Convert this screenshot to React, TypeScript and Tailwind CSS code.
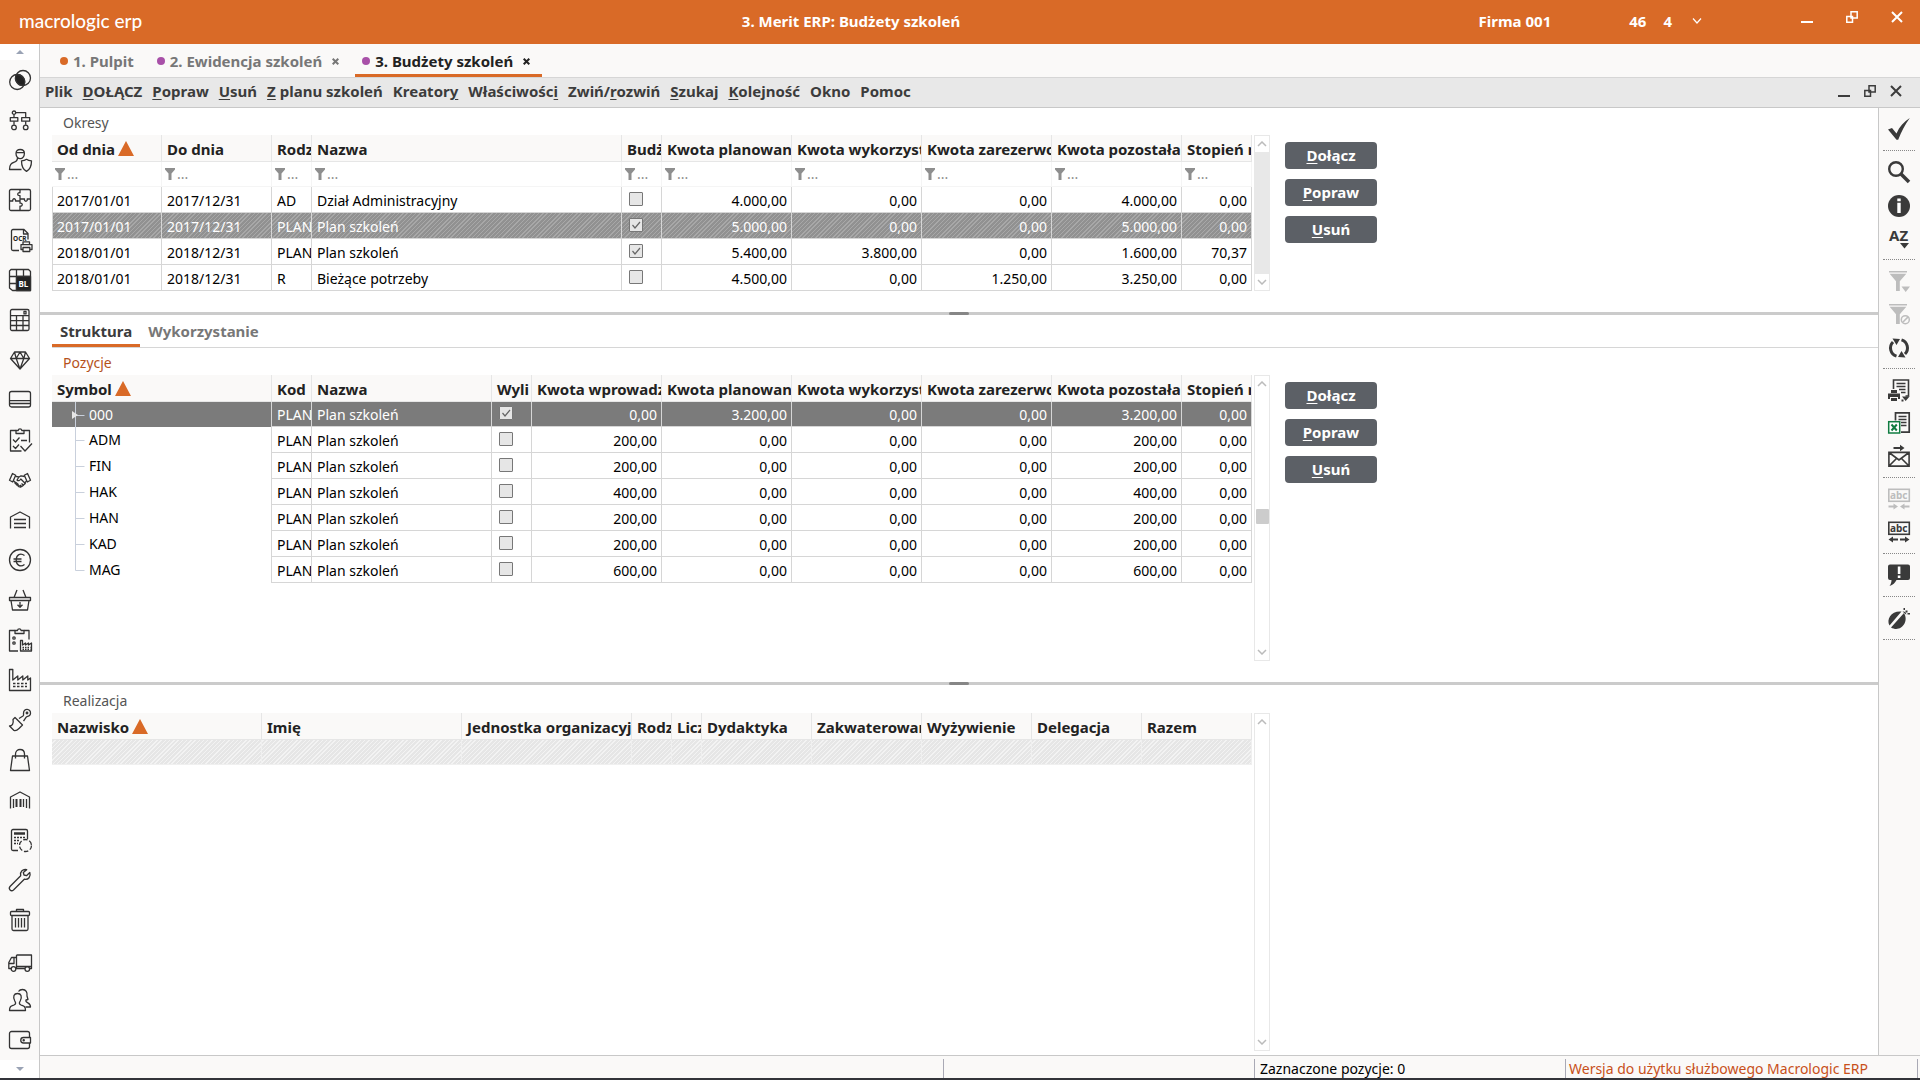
import type { ReactNode } from "react";

type Align = "left" | "right" | "check";

type Column = {
  label: string;
  width: number;
  align?: Align;
  sorted?: boolean;
};

type Row = {
  cells: (string | boolean)[];
  selected?: boolean;
};

const periodColumns: Column[] = [
  { label: "Od dnia", width: 110, sorted: true },
  { label: "Do dnia", width: 110 },
  { label: "Rodz", width: 40 },
  { label: "Nazwa", width: 310 },
  { label: "Budż", width: 40, align: "check" },
  { label: "Kwota planowana", width: 130, align: "right" },
  { label: "Kwota wykorzyst", width: 130, align: "right" },
  { label: "Kwota zarezerwo", width: 130, align: "right" },
  { label: "Kwota pozostała", width: 130, align: "right" },
  { label: "Stopień r", width: 70, align: "right" },
];

const periodRows: Row[] = [
  { cells: ["2017/01/01", "2017/12/31", "AD", "Dział Administracyjny", false, "4.000,00", "0,00", "0,00", "4.000,00", "0,00"] },
  { cells: ["2017/01/01", "2017/12/31", "PLAN", "Plan szkoleń", true, "5.000,00", "0,00", "0,00", "5.000,00", "0,00"], selected: true },
  { cells: ["2018/01/01", "2018/12/31", "PLAN", "Plan szkoleń", true, "5.400,00", "3.800,00", "0,00", "1.600,00", "70,37"] },
  { cells: ["2018/01/01", "2018/12/31", "R", "Bieżące potrzeby", false, "4.500,00", "0,00", "1.250,00", "3.250,00", "0,00"] },
];

const itemColumns: Column[] = [
  { label: "Symbol", width: 220, sorted: true },
  { label: "Kod", width: 40 },
  { label: "Nazwa", width: 180 },
  { label: "Wyli", width: 40, align: "check" },
  { label: "Kwota wprowadz", width: 130, align: "right" },
  { label: "Kwota planowana", width: 130, align: "right" },
  { label: "Kwota wykorzyst", width: 130, align: "right" },
  { label: "Kwota zarezerwo", width: 130, align: "right" },
  { label: "Kwota pozostała", width: 130, align: "right" },
  { label: "Stopień r", width: 70, align: "right" },
];

const itemRows: Row[] = [
  { cells: ["000", "PLAN", "Plan szkoleń", true, "0,00", "3.200,00", "0,00", "0,00", "3.200,00", "0,00"], selected: true },
  { cells: ["ADM", "PLAN", "Plan szkoleń", false, "200,00", "0,00", "0,00", "0,00", "200,00", "0,00"] },
  { cells: ["FIN", "PLAN", "Plan szkoleń", false, "200,00", "0,00", "0,00", "0,00", "200,00", "0,00"] },
  { cells: ["HAK", "PLAN", "Plan szkoleń", false, "400,00", "0,00", "0,00", "0,00", "400,00", "0,00"] },
  { cells: ["HAN", "PLAN", "Plan szkoleń", false, "200,00", "0,00", "0,00", "0,00", "200,00", "0,00"] },
  { cells: ["KAD", "PLAN", "Plan szkoleń", false, "200,00", "0,00", "0,00", "0,00", "200,00", "0,00"] },
  { cells: ["MAG", "PLAN", "Plan szkoleń", false, "600,00", "0,00", "0,00", "0,00", "600,00", "0,00"] },
];

const executionColumns: Column[] = [
  { label: "Nazwisko", width: 210, sorted: true },
  { label: "Imię", width: 200 },
  { label: "Jednostka organizacyj", width: 170 },
  { label: "Rodz", width: 40 },
  { label: "Licz", width: 30 },
  { label: "Dydaktyka", width: 110 },
  { label: "Zakwaterowan", width: 110 },
  { label: "Wyżywienie", width: 110 },
  { label: "Delegacja", width: 110 },
  { label: "Razem", width: 110 },
];

// before, hot key, after
const menuItems: [string, string, string][] = [
  ["Plik", "", ""],
  ["", "D", "OŁĄCZ"],
  ["", "P", "opraw"],
  ["", "U", "suń"],
  ["", "Z", " planu szkoleń"],
  ["Kreator", "y", ""],
  ["Właściwośc", "i", ""],
  ["Zwiń/", "r", "ozwiń"],
  ["", "S", "zukaj"],
  ["", "K", "olejność"],
  ["Okno", "", ""],
  ["Pomoc", "", ""],
];

const sidebarIcons: { name: string; art: ReactNode }[] = [
  {
    name: "Controlling",
    art: (
      <>
        <circle cx="9.2" cy="14" r="7.5" />
        <circle cx="15" cy="10" r="7.5" />
        <path d="M8.34 6.55A7.5 7.5 0 0 1 15.86 17.45A7.5 7.5 0 0 1 8.34 6.55z" fill="#222" />
      </>
    ),
  },
  {
    name: "Struktura",
    art: (
      <>
        <circle cx="6" cy="4.7" r="1.7" />
        <path d="M7.7 4.7h10v5M6 6.4v3.3M6 13.2v3.6M17.7 13.2v3.6" />
        <rect x="2.3" y="9.7" width="7.5" height="3.5" />
        <rect x="13.7" y="9.7" width="8" height="3.5" />
        <circle cx="6" cy="19.4" r="2.3" />
        <circle cx="17.7" cy="19.4" r="2.3" />
      </>
    ),
  },
  {
    name: "Uprawnienia",
    art: (
      <>
        <path d="M8 5.5c0-2.8 1.6-4 4.2-4s4.2 1.2 4.2 4c0 2.600-1.800 5.200-4.200 5.200S8 8.100 8 5.500zM8 4.600h8.400" />
        <path d="M9.500 9.500c0 3-1 4-3.200 4.700C3.300 15.300 1.500 16.500 1.500 21.500h12" />
        <path d="M13.500 12.800c2 0 3.700-.5 5-1.500 1.300 1 3 1.500 5 1.500 0 5-1.300 8.700-5 10.600-3.700-1.900-5-5.600-5-10.600z" />
      </>
    ),
  },
  {
    name: "Moduły",
    art: (
      <>
        <rect x="1.500" y="1.500" width="21" height="21" rx="1.500" />
        <path d="M12 1.500v3.300c-3-.8-3 3.400 0 2.800v3.600M12 12.500v2.700c3-.7 3 3.500 0 2.900v4.400M1.500 13h3.300c-.8-3 3.400-3 2.700 0H12M22.500 11h-3.300c.8 3-3.400 3-2.700 0H12v2" />
      </>
    ),
  },
  {
    name: "OCR",
    art: (
      <>
        <path d="M11 22.500H5a1.500 1.500 0 0 1-1.500-1.500V3A1.500 1.500 0 0 1 5 1.500h11l4 4v6M15.500 1.500V6H20" />
        <text x="5" y="13" fontSize="6.500" fontWeight="700" fill="#222" stroke="none">OCR</text>
        <path d="M15 16.500v-2.700h6.500v2.700M14.500 21.500H13v-4.800h11v4.800h-1.500M15 19.500h6.800v4H15z" />
      </>
    ),
  },
  {
    name: "BL",
    art: (
      <>
        <path d="M3 1.500h17.500l2 2v19H4.500l-3-2.500V3z" />
        <path d="M8.500 1.500v21M15.500 1.500V9M1.500 8.500h21M1.500 15.500h7" />
        <path d="M8.500 8.500h14v14h-14z" fill="#222" />
        <text x="10.500" y="19" fontSize="8" fontWeight="700" fill="#fff" stroke="none">BL</text>
      </>
    ),
  },
  {
    name: "Kalkulator",
    art: (
      <>
        <rect x="2.500" y="1.500" width="18.500" height="21" rx="1.500" />
        <path d="M2.500 7.700H21M2.500 12.700H21M2.500 17.500H21M8.500 7.700v14.800M15 7.700v14.800" />
        <rect x="16" y="3.300" width="2" height="2.600" />
      </>
    ),
  },
  {
    name: "Środki trwałe",
    art: <path d="M6.500 4h11l4 6.500L12 21 2.500 10.500zM2.500 10.500h19M6.500 4l1.700 6.500L12 21l3.800-10.500L17.500 4M8.200 10.500 12 4l3.800 6.500" />,
  },
  {
    name: "Karta",
    art: (
      <>
        <rect x="1.500" y="3.500" width="21" height="15.500" rx="2" />
        <path d="M1.500 12.700h21M1.500 15.500h21" />
      </>
    ),
  },
  {
    name: "Zadania",
    art: (
      <>
        <path d="M8 2.500H2.500v20.500h11M16 2.500h5.500v12" />
        <path d="M8 5.500V2.500h2.200c.3-2.300 3.300-2.300 3.600 0H16v3z" />
        <path d="m5 11.500 2.500 2.500 4-4.500M13 12.500h6M5 18l2.500 2.500 3.500-4M12.500 18l4.500 5 7-7.500" />
      </>
    ),
  },
  {
    name: "Kontrahenci",
    art: (
      <>
        <path d="m4.500 5.500 3.200 1.700L4.700 14l-3.200-1.700zM19.500 5.500l-3.200 1.700L19.300 14l3.200-1.700z" />
        <path d="M7.500 8.300 11 9l2-1.200 3.500.7M5.500 12.800l2 2M18.500 12.800l-1.700 2.200M11 9l-2 3c1.200 1.200 2.700.7 3.800-1l4.500 4.500-1.500 1.300M13.500 15.500l2 1.800-1.700 1.200-1.800-1.500M12 17l1 1.800-1.500.6" />
        <path d="m7 16 1.500-1.800M8.500 17.500l1.700-2M10.200 18.800l1.300-1.500" strokeWidth="2" />
      </>
    ),
  },
  {
    name: "Magazyn",
    art: <path d="M2.500 20.500V9L12 4l9.500 5v11.500M6 11.500h12M6 15.500h12M6 19.500h12" />,
  },
  {
    name: "Finanse",
    art: (
      <>
        <circle cx="12" cy="12" r="10.500" />
        <path d="M16.500 7.500c-4-3-8.300-.8-8.300 4.500s4.300 7.500 8.300 4.500M5.500 11h8M5.500 13.500h8" />
      </>
    ),
  },
  {
    name: "Zakupy",
    art: (
      <>
        <path d="M1.500 9.500h21v3h-21zM3 12.500 4.500 22h15l1.500-9.500M6 9.500l3-7.500M18 9.500 15 2M12 14v5M9.500 16.700 12 19.200l2.500-2.500" />
      </>
    ),
  },
  {
    name: "Zlecenia produkcji",
    art: (
      <>
        <path d="M7 2.500H1.500v20.500H10M16 2.500h5v9" />
        <path d="M7 5.500V2.500h2.500c.3-2.300 3.300-2.300 3.600 0H16v3z" />
        <circle cx="6" cy="10" r="1.200" />
        <circle cx="6" cy="15" r="1.200" />
        <path d="M12.500 23V12.500h2V17l3-2v2l3-2v2l3-2v8z" />
        <path d="M14.500 19.500h8M14.500 21.300h8" strokeDasharray="1.500 1" />
      </>
    ),
  },
  {
    name: "Produkcja",
    art: (
      <>
        <path d="M1.500 22.500v-21h3.300V12l5-4v4l5-4v4l5-4v4l2.700-2v12.500z" />
        <path d="M5 15.500h14M5 18.500h14" strokeDasharray="2.500 1.500" />
      </>
    ),
  },
  {
    name: "Czyszczenie",
    art: (
      <>
        <path d="M7 9.500 14.500 17 11 20.500c-2 2-3.500 2.500-5 2L1.500 18c2.500 0 4.500-2 3.500-6.500zM11 10.500l4-2.500c1-.7.500-1.500.5-2.700 0-5.500 7.500-5 7 .2-.3 3.500-3.500 2.500-4.300 3.700l-2.700 4M9 11.500l3.500 3.500" />
        <circle cx="19" cy="5" r=".8" />
      </>
    ),
  },
  {
    name: "Sprzedaż",
    art: (
      <>
        <path d="M4.500 8h15l2 14.500h-19z" />
        <path d="M7.500 10.500V6c0-6 9-6 9 0v4.500" />
      </>
    ),
  },
  {
    name: "Magazyn kodów",
    art: (
      <>
        <path d="M2.500 20.500V9L12 4l9.500 5v11.500" />
        <path d="M5.500 11v9M15.500 11v8M18.500 11v9" />
        <path d="M8.500 11v8M12.500 11v8" strokeWidth="2" />
      </>
    ),
  },
  {
    name: "Rozliczenia",
    art: (
      <>
        <path d="M10 22.500H5A1.500 1.500 0 0 1 3.500 21V3A1.500 1.500 0 0 1 5 1.500h13A1.500 1.500 0 0 1 19.500 3v8" />
        <path d="M6 5.500h11" strokeWidth="2.500" />
        <path d="M6 9.500h11M6 12.500h6M6 15.500h4" strokeDasharray="2 1" />
        <circle cx="17.500" cy="17.500" r="6" strokeDasharray="4.500 1.800" />
      </>
    ),
  },
  {
    name: "Serwis",
    art: <path d="M21.800 4.500 18.500 7.700 16 7l-.7-2.500L18.700 1.700c-3.700-1-7 2-6 6L2 18.500c-2 2.500 1 5.500 3.500 3.500L16.300 11.200c4 1 6.900-2.700 5.500-6.700z" />,
  },
  {
    name: "Kosz",
    art: (
      <>
        <rect x="2.500" y="3.500" width="19" height="4" rx="1" />
        <path d="M8.500 3.500v-2h7v2M4 7.500v13.500a1.500 1.500 0 0 0 1.500 1.500h13a1.500 1.500 0 0 0 1.500-1.500V7.500M7.500 10v9.500M10.500 10v9.500M13.500 10v9.500M16.500 10v9.500" />
      </>
    ),
  },
  {
    name: "Transport",
    art: (
      <>
        <path d="M8.500 7H23.500v13.500H22M8.500 9.500H3.500L.8 14.500v6H3M8.500 7v13.500M8 20.500h9M.8 15.500H6v-6M8.500 18.500h15" />
        <circle cx="5.500" cy="21" r="2.300" />
        <circle cx="19.300" cy="21" r="2.300" />
      </>
    ),
  },
  {
    name: "Kadry",
    art: (
      <>
        <path d="M1.500 22.500c0-4.500 2-4.500 4.500-5.500 2-.8 2-2 .8-4C4.500 8.500 6 5.500 9.500 5.500s5 3 2.700 7.500c-1.200 2-1.200 3.200.8 4 2.500 1 4.500 1 4.500 5.500z" />
        <path d="M10.500 3.500c1-1.500 2.300-2 4-2 3.500 0 5 3 4.500 6.500l1 3.500-2 .5c-.5 1.500 0 2 1.500 2.700 2 1 3 1.300 3 4.300h-5" />
      </>
    ),
  },
  {
    name: "Kasa",
    art: (
      <>
        <path d="M21.500 9V5.500a2 2 0 0 0-2-2h-16a2 2 0 0 0-2 2v13a2 2 0 0 0 2 2h16a2 2 0 0 0 2-2V15" />
        <path d="M22.500 9.500h-7a2.700 2.700 0 0 0 0 5.500h7z" />
        <circle cx="15.700" cy="12.200" r=".6" />
      </>
    ),
  },
];

function ToolIcon({ children }: { children: ReactNode }) {
  return (
    <svg viewBox="1 1 22 22" className="h-[22px] w-[22px] overflow-visible" fill="#3a3a3a" stroke="none" aria-hidden="true">
      {children}
    </svg>
  );
}

const toolGroups: { name: string; disabled?: boolean; art: ReactNode }[][] = [
  [{ name: "Zatwierdź", art: <path d="M1 12.500 5 11l4.500 5.500C12.500 9.500 17 4.500 22.800 1 18 7.500 14.500 14.500 11.200 22.800H9.500z" /> }],
  [
    {
      name: "Szukaj",
      art: (
        <g fill="none" stroke="#3a3a3a">
          <circle cx="9" cy="9" r="6.800" strokeWidth="2.400" />
          <path d="m14 14 8 8" strokeWidth="3.600" />
        </g>
      ),
    },
    {
      name: "Informacje",
      art: (
        <>
          <circle cx="12" cy="13" r="11" />
          <path d="M10.300 5.500h3.400v2.700h-3.400zM10.300 9.700h3.400V20h-3.400z" fill="#fff" />
        </>
      ),
    },
    {
      name: "Sortuj",
      art: (
        <>
          <text x="2" y="15" fontSize="15" fontWeight="700">AZ</text>
          <path d="M13 17h9L17.500 22.500z" />
        </>
      ),
    },
  ],
  [
    {
      name: "Filtr",
      disabled: true,
      art: (
        <g fill="#bdbdbd">
          <path d="M2 2h18v1.600H2zM2.700 4.700h16.600l-6.500 7.500V22H9v-9.800zM14.500 17.500h8.500L18.700 23z" />
        </g>
      ),
    },
    {
      name: "Usuń filtr",
      disabled: true,
      art: (
        <g fill="#bdbdbd">
          <path d="M2 2h18v1.600H2zM2.700 4.700h16.600l-6.500 7.500V22H9v-9.800z" />
          <circle cx="18.300" cy="17.700" r="5" fill="#faf9f8" />
          <circle cx="18.300" cy="17.700" r="4" fill="none" stroke="#bdbdbd" strokeWidth="1.500" />
          <path d="m15.500 20.500 5.600-5.600" stroke="#bdbdbd" strokeWidth="1.500" />
        </g>
      ),
    },
    {
      name: "Odśwież",
      art: (
        <>
          <g fill="none" stroke="#3a3a3a" strokeWidth="3">
            <path d="M14.500 4.900A8.500 8.500 0 0 1 18 19" />
            <path d="M9.500 21.100A8.500 8.500 0 0 1 6 7" />
          </g>
          <path d="M5.500 3.500 13 4l-3.500 6zM18.500 22.500 11 22l3.500-6z" />
        </>
      ),
    },
  ],
  [
    {
      name: "Drukuj",
      art: (
        <>
          <path d="M6.500 11V2H21.500v16h-3M9.500 5.500h9M9.500 8.500h9M12 11.500h6.500M14 14.500h4.500" fill="none" stroke="#3a3a3a" strokeWidth="1.600" />
          <path d="M4 12h6v3H4zM1 15.500h12V21h-2v-2H3v2H1zM4 20h6v3H4zM14.500 21.500h2v2h-2zM15 18.500h7.500L18.700 23z" />
        </>
      ),
    },
    {
      name: "Eksport do Excela",
      art: (
        <>
          <path d="M8.500 9.500V1.800h13.700v19.400H14M11.500 5.500h8M11.500 8.500h8M14 11.500h5.500M14 14.500h5.500" fill="none" stroke="#3a3a3a" strokeWidth="1.700" />
          <rect x="1.700" y="10.700" width="11" height="11.300" fill="#fff" stroke="#107c41" strokeWidth="1.500" />
          <path d="m4.500 13.500 5.300 6M9.800 13.500l-5.300 6" stroke="#107c41" strokeWidth="2" />
        </>
      ),
    },
    {
      name: "Wyślij",
      art: (
        <>
          <path d="M1.900 8.400h20.200v13.700H1.900zM2 8.500l10 7.500 10-7.500M2 22l7.500-7.500M22 22l-7.500-7.500" fill="none" stroke="#3a3a3a" strokeWidth="1.600" />
          <path d="M6.500 3H13V.8L17.500 4 13 7.200V5H6.500z" />
        </>
      ),
    },
  ],
  [
    {
      name: "Zwęź kolumny",
      disabled: true,
      art: (
        <g fill="#bdbdbd">
          <rect x="1.800" y="2.300" width="20.500" height="12" fill="none" stroke="#bdbdbd" strokeWidth="1.600" />
          <text x="3" y="12" fontSize="10" fontWeight="700">abc</text>
          <path d="M1.500 18.500h5v-2l4.500 3-4.500 3v-2h-5zM22.500 18.500h-5v-2l-4.500 3 4.500 3v-2h5z" />
        </g>
      ),
    },
    {
      name: "Rozszerz kolumny",
      art: (
        <>
          <rect x="1.800" y="2.300" width="20.500" height="12" fill="none" stroke="#3a3a3a" strokeWidth="1.600" />
          <text x="3" y="12" fontSize="10" fontWeight="700">abc</text>
          <path d="M11 18.500H6v-2l-4.500 3 4.500 3v-2h5zM13 18.500h5v-2l4.500 3-4.500 3v-2h-5z" />
        </>
      ),
    },
  ],
  [
    {
      name: "Uwagi",
      art: (
        <>
          <path d="M3 1.500h18a2 2 0 0 1 2 2v11.500a2 2 0 0 1-2 2H9.500c-1.500 3-3.500 5-7 6 1.300-1.700 2-3.700 2-6H3a2 2 0 0 1-2-2V3.500a2 2 0 0 1 2-2z" />
          <path d="M10.800 3.500h2.600v7.500h-2.600zM10.800 12.500h2.600V15h-2.600z" fill="#fff" />
        </>
      ),
    },
  ],
  [
    {
      name: "Zgłoś błąd",
      art: (
        <>
          <path d="M2.500 19.500C-1 13 4.500 4.500 14.500 5.500zM4 21.500 17 7c5.500 9-3.500 20-13 14.500z" />
          <path d="M15.500 5.500c2-.5 4 1.300 3.800 3.300zM16.500 2h1.500v2h-1.500zM20.500 7h2.500v1.500h-2.500zM18.500 4.500h2v2h-2z" />
        </>
      ),
    },
  ],
];

function HotText({ parts }: { parts: [string, string, string] }) {
  return (
    <>
      {parts[0]}
      {parts[1] && <span className="underline underline-offset-2">{parts[1]}</span>}
      {parts[2]}
    </>
  );
}

function WindowControls({ gap }: { gap: string }) {
  return (
    <div className={`flex items-center ${gap}`}>
      <button aria-label="Minimalizuj">
        <svg viewBox="0 0 12 12" className="block h-3 w-3" fill="currentColor">
          <path d="M0 10h12v2H0z" />
        </svg>
      </button>
      <button aria-label="Przywróć">
        <svg viewBox="0 0 12 12" className="block h-3 w-3" fill="none" stroke="currentColor" strokeWidth="1.500">
          <path d="M5 .8h6.200v6.200H5zM.8 5.500h5.700v5.700H.8z" />
        </svg>
      </button>
      <button aria-label="Zamknij">
        <svg viewBox="0 0 12 12" className="block h-3 w-3" fill="none" stroke="currentColor" strokeWidth="2">
          <path d="m1 1 10 10M11 1 1 11" />
        </svg>
      </button>
    </div>
  );
}

function CheckCell({ checked, label }: { checked: boolean; label: string }) {
  return (
    <label className="relative ml-[7px] block h-[14px] w-[14px]">
      <input
        type="checkbox"
        checked={checked}
        readOnly
        aria-label={label}
        className="peer block h-[14px] w-[14px] appearance-none rounded-[1px] border border-[#777] bg-[#e6e6e6]"
      />
      <svg
        viewBox="0 0 14 14"
        className="absolute inset-0 hidden h-[14px] w-[14px] peer-checked:block"
        fill="none"
        stroke="#666"
        strokeWidth="1.200"
      >
        <path d="m3.500 7 2.500 3 5-6" />
      </svg>
    </label>
  );
}

function TreeBranch({ first, last }: { first: boolean; last: boolean }) {
  return (
    <svg viewBox="0 0 18 26" className="mr-[3px] ml-4 h-[26px] w-[18px] shrink-0" fill="none" stroke="#c9d0dc">
      <path d={last ? "M7.500 0v13.500" : "M7.500 0v26"} />
      <path d="M7.500 13.500h9" />
      {first && <path d="M4 9v8l6-4z" fill="#e6e6e6" stroke="none" />}
    </svg>
  );
}

function TableHead({ columns, filters }: { columns: Column[]; filters?: boolean }) {
  return (
    <>
      <colgroup>
        {columns.map((c) => (
          <col key={c.label} style={{ width: c.width }} />
        ))}
      </colgroup>
      <thead>
        <tr className="h-[27px] bg-[#faf9f8]">
          {columns.map((c) => (
            <th
              key={c.label}
              className="overflow-hidden border-r border-b border-[#e6e6e6] p-0 pt-px pl-[5px] text-left text-[15px] font-bold whitespace-nowrap text-[#222]"
            >
              <span className="flex items-center gap-[3px]">
                {c.label}
                {c.sorted && (
                  <svg viewBox="0 0 16 15" className="h-[15px] w-4 shrink-0" fill="#d96a27">
                    <path d="M8 0l8 15H0z" />
                  </svg>
                )}
              </span>
            </th>
          ))}
        </tr>
        {filters && (
          <tr className="h-[25px]">
            {columns.map((c) => (
              <td key={c.label} className="border-r border-b border-[#f5f5f5] p-0 pl-[3px]">
                <button className="flex items-center gap-[2px] text-[#8e8e8e]" aria-label={`Filtr: ${c.label}`}>
                  <svg viewBox="0 0 10 12" className="h-3 w-[10px]" fill="currentColor">
                    <path d="M0 0h10v1.500L6.500 5.500V12h-3V5.500L0 1.500z" />
                  </svg>
                  <span>...</span>
                </button>
              </td>
            ))}
          </tr>
        )}
      </thead>
    </>
  );
}

function DataTable({ title, columns, rows, filters, tree }: { title: string; columns: Column[]; rows: Row[]; filters?: boolean; tree?: boolean }) {
  return (
    <table aria-label={title} className="w-[1200px] table-fixed border-separate border-spacing-0 self-start">
      <TableHead columns={columns} filters={filters} />
      <tbody>
        {rows.map((row, r) => {
          let tone = "text-black";
          if (row.selected) {
            tone = tree
              ? "bg-[#7b7b7b] text-white"
              : "bg-[repeating-linear-gradient(135deg,#919191_0_2px,#a8a8a8_2px_3px)] text-white";
          }
          const first = tree && r === 0;
          return (
            <tr key={r} className={`${first ? "h-[25px]" : "h-[26px]"} ${tone}`}>
              {columns.map((c, i) => {
                const value = row.cells[i];
                if (tree && i === 0) {
                  return (
                    <td key={c.label} className="border-r border-[#d6d6d6] p-0">
                      <div className={`flex items-center overflow-hidden ${first ? "h-[25px]" : "h-[26px]"}`}>
                        <TreeBranch first={r === 0} last={r === rows.length - 1} />
                        {value}
                      </div>
                    </td>
                  );
                }
                if (c.align === "check") {
                  return (
                    <td key={c.label} className="border-r border-b border-[#d6d6d6] p-0 pb-[2px]">
                      <CheckCell checked={Boolean(value)} label={c.label} />
                    </td>
                  );
                }
                return (
                  <td
                    key={c.label}
                    className={`overflow-hidden border-r border-b border-[#d6d6d6] p-0 pt-[2px] whitespace-nowrap ${
                      c.align === "right" ? "pr-1 text-right" : i === 0 ? "border-l pl-1" : "pl-[5px]"
                    }`}
                  >
                    {value}
                  </td>
                );
              })}
            </tr>
          );
        })}
        {rows.length === 0 && (
          <tr className="h-[25px] bg-[repeating-linear-gradient(135deg,#e6e6e6_0_2px,#f3f3f3_2px_3px)]">
            {columns.map((c) => (
              <td key={c.label} className="border-r border-b border-[#f0f0f0]" />
            ))}
          </tr>
        )}
      </tbody>
    </table>
  );
}

function Chevron({ up }: { up?: boolean }) {
  return (
    <svg viewBox="0 0 10 6" className="h-[6px] w-[10px]" fill="none" stroke="#bbb" strokeWidth="1.500">
      <path d={up ? "m1 5 4-4 4 4" : "m1 1 4 4 4-4"} />
    </svg>
  );
}

function ScrollBar({ thumb }: { thumb?: "full" | "small" }) {
  return (
    <div className="ml-[2px] flex w-4 shrink-0 flex-col items-center border border-[#e8e8e8] bg-white">
      <button aria-label="Przewiń w górę" className="flex h-4 items-center">
        <Chevron up />
      </button>
      <div className="flex w-full flex-1 items-center justify-center">
        {thumb === "full" && <div className="h-full w-full bg-[#e8e8e8]" />}
        {thumb === "small" && <div className="mb-1 h-[15px] w-[13px] rounded-[1px] bg-[#ccc]" />}
      </div>
      <button aria-label="Przewiń w dół" className="flex h-4 items-center">
        <Chevron />
      </button>
    </div>
  );
}

function ActionButtons() {
  const actions: [string, string, string][] = [
    ["", "D", "ołącz"],
    ["", "P", "opraw"],
    ["", "U", "suń"],
  ];
  return (
    <div className="ml-[15px] flex flex-col gap-[10px] pt-[7px]">
      {actions.map((a) => (
        <button key={a[1]} className="h-[27px] w-[92px] rounded-[4px] bg-[#5c6066] pb-[2px] text-[15px] font-bold text-white">
          <HotText parts={a} />
        </button>
      ))}
    </div>
  );
}

function Splitter() {
  return (
    <div className="flex h-[3px] justify-center bg-[#cbcbcb]">
      <div className="h-[3px] w-5 rounded-full bg-[#868686]" />
    </div>
  );
}

function WorkTab({ dot, label, closable, active }: { dot: string; label: string; closable?: boolean; active?: boolean }) {
  return (
    <div
      className={`flex h-[33px] items-center border-b-[3px] pt-1 pr-3 pl-[7px] text-[15px] ${
        active ? "border-[#d96a27] text-[#222]" : "border-transparent text-[#777]"
      }`}
    >
      <span className={`mr-[5px] h-2 w-2 rounded-full ${dot}`} />
      <button className="font-bold">{label}</button>
      {closable && (
        <button aria-label={`Zamknij ${label}`} className="ml-[10px]">
          <svg viewBox="0 0 7 7" className="block h-[7px] w-[7px]" fill="none" stroke="currentColor" strokeWidth="2">
            <path d="m.7.7 5.600 5.600M6.300.7.7 6.300" />
          </svg>
        </button>
      )}
    </div>
  );
}

export default function App() {
  return (
    <div className="flex min-h-screen flex-col bg-white font-['Noto_Sans','DejaVu_Sans',sans-serif] text-[14px] leading-5 text-black">
      <header className="flex h-11 shrink-0 bg-[#d96a27] text-[15px] font-bold text-white">
        <div className="flex flex-1 items-center pb-[2px]">
          <div className="flex-1">
            <span className="ml-[19px] font-['Lato','Noto_Sans',sans-serif] text-[19px] font-medium">macrologic erp</span>
          </div>
          <h1>3. Merit ERP: Budżety szkoleń</h1>
          <div className="flex flex-1 items-center justify-end">
            <span className="mr-[78px]">Firma 001</span>
            <span className="mr-[17px]">46</span>
            <span className="mr-5">4</span>
            <button aria-label="Więcej">
              <svg viewBox="0 0 10 6" className="h-[6px] w-[10px]" fill="none" stroke="currentColor" strokeWidth="1.200">
                <path d="m1 .5 4 4.500 4-4.500" />
              </svg>
            </button>
          </div>
        </div>
        <div className="flex w-[218px] justify-end pt-[11px] pr-[17px]">
          <div className="h-3">
            <WindowControls gap="gap-[33px]" />
          </div>
        </div>
      </header>

      <div className="flex flex-1">
        <nav className="flex w-10 shrink-0 flex-col items-center border-r border-[#c8c8c8] bg-[#faf9f8]">
          <button aria-label="W górę" className="flex h-4 w-full items-center justify-center bg-white">
            <svg viewBox="0 0 8 4" className="h-1 w-2" fill="#9aa3b5">
              <path d="M4 0l4 4H0z" />
            </svg>
          </button>
          {sidebarIcons.map((icon) => (
            <button key={icon.name} aria-label={icon.name} className="flex h-10 w-10 items-center justify-center">
              <svg viewBox="0 0 24 24" className="h-6 w-6 overflow-visible" fill="none" stroke="#333" strokeWidth="1.300" strokeLinejoin="round">
                {icon.art}
              </svg>
            </button>
          ))}
          <button aria-label="W dół" className="flex w-full flex-1 items-center justify-center bg-white">
            <svg viewBox="0 0 8 4" className="h-1 w-2" fill="#9aa3b5">
              <path d="M0 0h8L4 4z" />
            </svg>
          </button>
        </nav>

        <div className="flex min-w-0 flex-1 flex-col">
          <div className="flex h-[34px] gap-1 border-b border-[#d6d6d6] bg-[#faf9f8] pl-[13px]">
            <WorkTab dot="bg-[#d96a27]" label="1. Pulpit" />
            <WorkTab dot="bg-[#a850a8]" label="2. Ewidencja szkoleń" closable />
            <WorkTab dot="bg-[#a850a8]" label="3. Budżety szkoleń" closable active />
          </div>

          <div className="flex h-[30px] items-center justify-between border-b border-[#c8c8c8] bg-[#e8e8e8] pr-[18px] pb-[3px] pl-[5px] text-[15px] text-[#3c3c3c]">
            <div className="flex gap-[10px] font-bold">
              {menuItems.map((m) => (
                <button key={m.join("")}>
                  <HotText parts={m} />
                </button>
              ))}
            </div>
            <WindowControls gap="gap-[14px]" />
          </div>

          <div className="flex flex-1">
            <main className="flex min-w-0 flex-1 flex-col">
              <section className="pt-[5px] pb-[21px] pl-3">
                <h2 className="mb-[2px] pl-[11px] text-[#555]">Okresy</h2>
                <div className="flex">
                  <DataTable title="Okresy" columns={periodColumns} rows={periodRows} filters />
                  <ScrollBar thumb="full" />
                  <ActionButtons />
                </div>
              </section>

              <Splitter />

              <section className="flex flex-col pb-[21px] pl-3">
                <div className="flex items-end border-b border-[#d6d6d6] pt-[6px] text-[15px] font-bold">
                  <button className="border-b-[3px] border-[#d96a27] px-2 pb-[3px] text-[#3c3c3c]">Struktura</button>
                  <button className="border-b-[3px] border-transparent px-2 pb-[3px] text-[#777]">Wykorzystanie</button>
                </div>
                <h2 className="mt-[5px] mb-[2px] pl-[11px] text-[#b5521b]">Pozycje</h2>
                <div className="flex min-h-[286px]">
                  <DataTable title="Pozycje" columns={itemColumns} rows={itemRows} tree />
                  <ScrollBar thumb="small" />
                  <ActionButtons />
                </div>
              </section>

              <Splitter />

              <section className="flex flex-1 flex-col pt-[6px] pb-1 pl-3">
                <h2 className="mb-[2px] pl-[11px] text-[#555]">Realizacja</h2>
                <div className="flex flex-1">
                  <DataTable title="Realizacja" columns={executionColumns} rows={[]} />
                  <ScrollBar />
                </div>
              </section>
            </main>

            <aside className="flex w-[42px] shrink-0 flex-col items-center border-l border-[#c8c8c8] bg-[#faf9f8] pr-[2px]">
              {toolGroups.map((group) => (
                <div
                  key={group[0].name}
                  className="flex w-8 flex-col items-center gap-[11px] border-b border-dotted border-[#888] py-[10px]"
                >
                  {group.map((tool) => (
                    <button key={tool.name} aria-label={tool.name} disabled={tool.disabled}>
                      <ToolIcon>{tool.art}</ToolIcon>
                    </button>
                  ))}
                </div>
              ))}
            </aside>
          </div>

          <footer className="flex h-[23px] border-t border-[#c8c8c8] bg-[#faf9f8] pt-[3px]">
            <div className="flex-1 border-r border-[#a9a9b5]" />
            <div className="w-[311px] border-r border-[#a9a9b5]" />
            <div className="w-[311px] border-r border-[#a9a9b5] pl-[5px]">Zaznaczone pozycje: 0</div>
            <div className="mr-[2px] w-[352px] border-r border-[#a9a9b5] pl-[3px] text-[#c8501a]">
              Wersja do użytku służbowego Macrologic ERP
            </div>
          </footer>
        </div>
      </div>
      <div className="h-[2px] shrink-0 bg-[#33343a]" />
    </div>
  );
}
